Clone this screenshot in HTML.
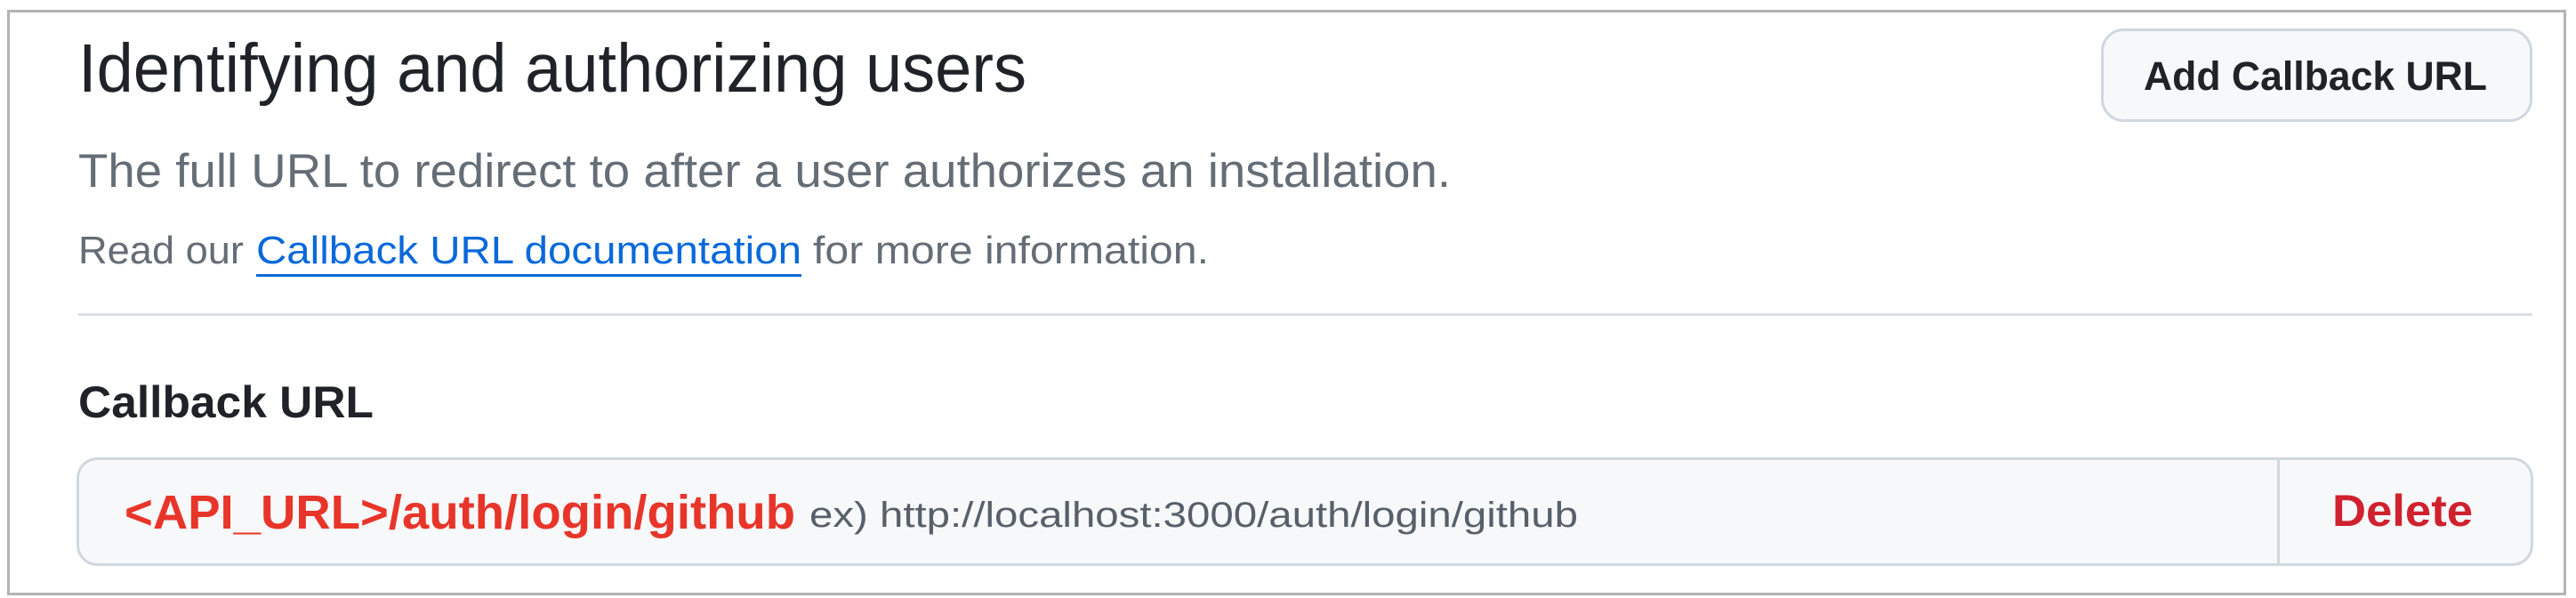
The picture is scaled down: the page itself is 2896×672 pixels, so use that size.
<!DOCTYPE html>
<html><head><meta charset="utf-8"><style>
html,body{margin:0;padding:0;background:#fff;width:2896px;height:672px;overflow:hidden}
svg{display:block}
text{font-family:"Liberation Sans",sans-serif}
</style></head><body>
<svg width="2896" height="672" viewBox="0 0 2896 672" xmlns="http://www.w3.org/2000/svg">
<rect x="0" y="0" width="2896" height="672" fill="#fff"/>
<rect x="9.5" y="12.5" width="2874" height="655" fill="#fff" stroke="#b4b4b4" stroke-width="3"/>
<text x="88" y="103" font-size="77" fill="#1f2328" textLength="1066" lengthAdjust="spacingAndGlyphs">Identifying and authorizing users</text>
<rect x="2363.5" y="33.5" width="482" height="102" rx="24" fill="#f6f8fa" stroke="#d0d7de" stroke-width="3"/>
<text x="2410" y="101" font-size="45" font-weight="bold" fill="#1f2328" textLength="386" lengthAdjust="spacingAndGlyphs">Add Callback URL</text>
<text x="88" y="210" font-size="53" fill="#656d76" textLength="1543" lengthAdjust="spacingAndGlyphs">The full URL to redirect to after a user authorizes an installation.</text>
<text x="88" y="296" font-size="44" fill="#656d76" textLength="186" lengthAdjust="spacingAndGlyphs">Read our</text>
<text x="288" y="296" font-size="44" fill="#0969da" textLength="613" lengthAdjust="spacingAndGlyphs">Callback URL documentation</text>
<rect x="288" y="308" width="613" height="3" fill="#0969da"/>
<text x="914" y="296" font-size="44" fill="#656d76" textLength="445" lengthAdjust="spacingAndGlyphs">for more information.</text>
<rect x="88" y="352" width="2759" height="3" fill="#d8dee4"/>
<text x="88" y="469" font-size="50" font-weight="bold" fill="#1f2328" textLength="332" lengthAdjust="spacingAndGlyphs">Callback URL</text>
<rect x="87.5" y="515.5" width="2759" height="119" rx="22" fill="#f6f8fa" stroke="#d0d7de" stroke-width="3"/>
<rect x="2560" y="517" width="3" height="116" fill="#d0d7de"/>
<text x="140" y="594" font-size="54" font-weight="bold" fill="#e8352a" font-family="DejaVu Sans, sans-serif" textLength="754" lengthAdjust="spacingAndGlyphs">&lt;API_URL&gt;/auth/login/github</text>
<text x="910" y="592" font-size="40" fill="#57606a" textLength="864" lengthAdjust="spacingAndGlyphs">ex) http://localhost:3000/auth/login/github</text>
<text x="2622" y="591" font-size="50" font-weight="bold" fill="#cf222e" textLength="158" lengthAdjust="spacingAndGlyphs">Delete</text>
</svg>
</body></html>
